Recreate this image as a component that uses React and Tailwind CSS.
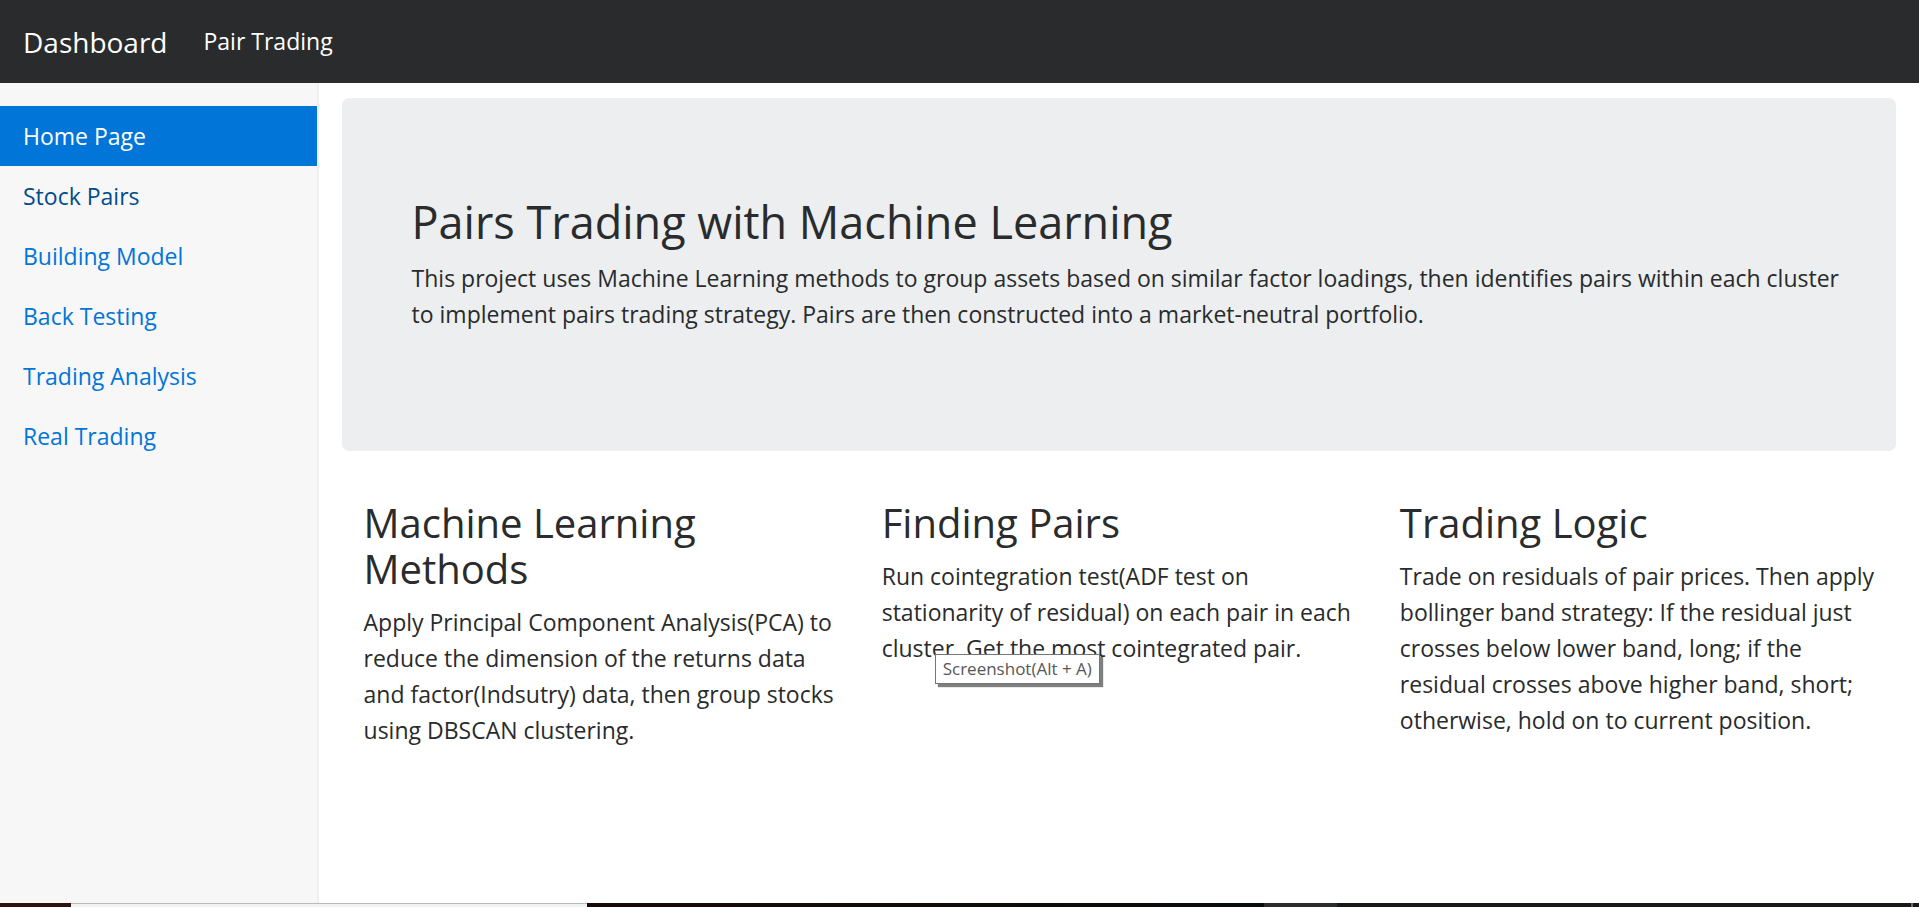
const links = ["Home Page", "Stock Pairs", "Building Model", "Back Testing", "Trading Analysis", "Real Trading"];

function linkColor(index) {
  if (index === 0) return "bg-[#0275d8] text-white";
  if (index === 1) return "text-[#014c8c]";
  return "text-[#0275d8]";
}

function Feature({ title, children, tooltip }) {
  return (
    <section className="relative min-w-0 pr-4 pl-[22px]">
      <h2 className="mb-3 text-[40px] leading-[46px]">{title}</h2>
      <p className="mb-6 leading-9">{children}</p>
      {tooltip && (
        <div
          role="tooltip"
          className="absolute top-[154px] left-[75px] flex h-[30px] items-center border border-[#767676] bg-white px-[7px] text-[17px] whitespace-nowrap text-[#575757] shadow-[3px_3px_1px_#00000080]"
        >
          {tooltip}
        </div>
      )}
    </section>
  );
}

export default function App() {
  return (
    <div className="flex min-h-screen flex-col bg-white font-['Open_Sans','Noto_Sans',sans-serif] text-[23px] text-[#292b2c]">
      <nav className="flex h-[83px] items-center gap-9 bg-[#292b2c] px-[23px] text-white">
        <a href="#" className="text-[28px]">Dashboard</a>
        <a href="#pair-trading">Pair Trading</a>
      </nav>
      <div className="flex flex-1">
        <aside className="w-[16.6%] shrink-0 border-r-2 border-[#eeeeee] bg-[#f7f7f7] pt-[23px]">
          <ul>
            {links.map((label, i) => (
              <li key={label}>
                <a href={"#" + i} className={"flex h-[60px] items-center px-[23px] " + linkColor(i)}>
                  {label}
                </a>
              </li>
            ))}
          </ul>
        </aside>
        <main className="min-w-0 flex-1 px-[23px] pt-[15px]">
          <header className="rounded-[7px] bg-[#eceeef] pt-[97px] pr-12 pb-[95px] pl-[70px]">
            <h1 className="mb-3 text-[45px] leading-[53px]">Pairs Trading with Machine Learning</h1>
            <p className="mb-6 leading-9">
              This project uses Machine Learning methods to group assets based on similar factor loadings, then
              identifies pairs within each cluster to implement pairs trading strategy. Pairs are then constructed into
              a market-neutral portfolio.
            </p>
          </header>
          <div className="mt-[49px] grid grid-cols-3">
            <Feature title="Machine Learning Methods">
              Apply Principal Component Analysis(PCA) to reduce the dimension of the returns data and factor(Indsutry)
              data, then group stocks using DBSCAN clustering.
            </Feature>
            <Feature title="Finding Pairs" tooltip="Screenshot(Alt + A)">
              Run cointegration test(ADF test on stationarity of residual) on each pair in each cluster. Get the most
              cointegrated pair.
            </Feature>
            <Feature title="Trading Logic">
              Trade on residuals of pair prices. Then apply bollinger band strategy: If the residual just crosses below
              lower band, long; if the residual crosses above higher band, short; otherwise, hold on to current
              position.
            </Feature>
          </div>
        </main>
      </div>
      <footer className="flex h-1">
        <div className="w-[71px] bg-[#2b1411]" />
        <div className="w-[516px] border-t border-[#b9bbb8] bg-[#f2f2f2]" />
        <div className="w-[677px] bg-linear-to-r from-[#1a0808] to-[#060d08]" />
        <div className="w-[73px] bg-[#2b2d2c]" />
        <div className="flex-1 bg-[#151a15]" />
        <div className="w-0.5 bg-[#6b6f6b]" />
        <div className="w-1.5 bg-[#151a15]" />
      </footer>
    </div>
  );
}
